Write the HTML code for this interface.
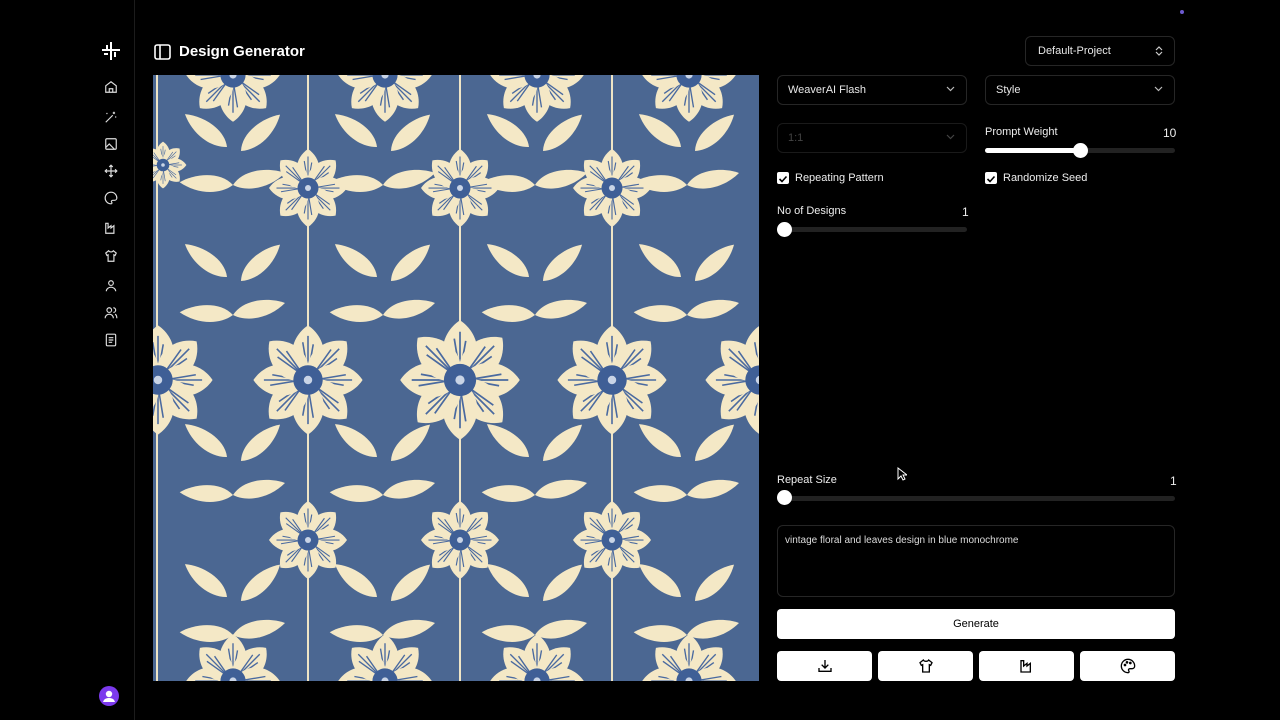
<!DOCTYPE html>
<html><head><meta charset="utf-8"><style>
*{box-sizing:border-box;margin:0;padding:0}
body{width:1280px;height:720px;background:#000;font-family:"Liberation Sans",sans-serif;color:#fff;position:relative;overflow:hidden}
.sb{position:absolute;left:0;top:0;width:135px;height:720px;border-right:1px solid #1c1c1c}
.a{position:absolute}
.sel{position:absolute;border:1px solid #262626;border-radius:6px;font-size:11px;padding-left:10px;display:flex;align-items:center;color:#e8e8e8}
.sel svg{position:absolute;right:11px;top:50%;margin-top:-4px}
.lbl{position:absolute;font-size:11px;color:#eee}
.track{position:absolute;height:5px;background:#222;border-radius:3px}
.thumb{position:absolute;width:15px;height:15px;border-radius:50%;background:#fff}
.cb{position:absolute;width:12px;height:12px;background:#fff;border-radius:2px}
.btn{position:absolute;background:#fff;border-radius:4px;color:#000;display:flex;align-items:center;justify-content:center}
</style></head><body>
<div class="sb"></div>
<svg class="a" style="left:100px;top:41px" width="22" height="20" viewBox="0 0 22 20" stroke="#fff" stroke-width="2" fill="none"><path d="M2 9h18M11 1v18M7 4v4M15 11v5M4 13h4"/></svg>
<svg class="a" viewBox="0 0 24 24" style="left:104px;top:80px" width="14" height="14" fill="none" stroke="#ddd" stroke-width="2"><path d="M3 10l9-7 9 7v11H3z M9 21v-6h6v6"/></svg>
<svg class="a" viewBox="0 0 24 24" style="left:104px;top:110px" width="14" height="14" fill="none" stroke="#ddd" stroke-width="2"><path d="M3 21L15 9M17 3v4M15 5h4M20 11v2M5 5v2"/></svg>
<svg class="a" viewBox="0 0 24 24" style="left:104px;top:137px" width="14" height="14" fill="none" stroke="#ddd" stroke-width="2"><rect x="3" y="3" width="18" height="18" rx="2"/><path d="M3 18l6-6 9 9M9 9h.01"/></svg>
<svg class="a" viewBox="0 0 24 24" style="left:104px;top:164px" width="14" height="14" fill="none" stroke="#ddd" stroke-width="2"><path d="M12 2v20M2 12h20M9 5l3-3 3 3M9 19l3 3 3-3M5 9l-3 3 3 3M19 9l3 3-3 3"/></svg>
<svg class="a" viewBox="0 0 24 24" style="left:104px;top:191px" width="14" height="14" fill="none" stroke="#ddd" stroke-width="2"><path d="M12 2a10 10 0 000 20c2 0 2-2 1-3s0-3 2-3h3a4 4 0 004-4c0-5-4-10-10-10z"/></svg>
<svg class="a" viewBox="0 0 24 24" style="left:104px;top:221px" width="14" height="14" fill="none" stroke="#ddd" stroke-width="2"><path d="M3 21V4h4v8l5-4v4l5-4v13z"/></svg>
<svg class="a" viewBox="0 0 24 24" style="left:104px;top:249px" width="14" height="14" fill="none" stroke="#ddd" stroke-width="2"><path d="M8 3l-5 4 2 4 2-1v11h10V10l2 1 2-4-5-4c-1 2-3 2-4 2s-3 0-4-2z"/></svg>
<svg class="a" viewBox="0 0 24 24" style="left:104px;top:279px" width="14" height="14" fill="none" stroke="#ddd" stroke-width="2"><circle cx="12" cy="7" r="4"/><path d="M4 21c0-4 4-7 8-7s8 3 8 7"/></svg>
<svg class="a" viewBox="0 0 24 24" style="left:104px;top:306px" width="14" height="14" fill="none" stroke="#ddd" stroke-width="2"><circle cx="9" cy="7" r="4"/><path d="M2 21c0-4 3-7 7-7s7 3 7 7M16 3a4 4 0 010 8M19 14c2 1 3 4 3 7"/></svg>
<svg class="a" viewBox="0 0 24 24" style="left:104px;top:333px" width="14" height="14" fill="none" stroke="#ddd" stroke-width="2"><rect x="4" y="2" width="16" height="20" rx="2"/><path d="M8 8h8M8 12h8M8 16h6"/></svg>
<div class="a" style="left:99px;top:686px;width:20px;height:20px;border-radius:50%;background:#7c3aed"><svg viewBox="0 0 20 20" width="20" height="20" fill="#fff"><circle cx="10" cy="8" r="3.2"/><path d="M4 16c1-3 3-4 6-4s5 1 6 4z"/></svg></div>
<div class="a" style="left:1180px;top:10px;width:4px;height:4px;border-radius:50%;background:#6d5bd0"></div>
<svg class="a" style="left:154px;top:44px" width="17" height="16" viewBox="0 0 17 16" fill="none" stroke="#fff" stroke-width="1.6"><rect x="1" y="1" width="15" height="14" rx="2"/><path d="M6 1v14"/></svg>
<div class="a" style="left:179px;top:43px;font-size:15px;font-weight:bold">Design Generator</div>

<svg class="a" style="left:153px;top:75px" width="606" height="606" viewBox="0 0 606 606">
<defs>
<g id="p"><path d="M0 0C-22 -14 -18 -40 0 -52C18 -40 22 -14 0 0z" fill="#f4e8c6"/><path d="M0 -6L-5 -36M0 -6L5 -34M0 -6L0 -42" stroke="#4a6aa0" stroke-width="1.5"/></g>
<g id="fl"><use href="#p"/><use href="#p" transform="rotate(45)"/><use href="#p" transform="rotate(90)"/><use href="#p" transform="rotate(135)"/><use href="#p" transform="rotate(180)"/><use href="#p" transform="rotate(225)"/><use href="#p" transform="rotate(270)"/><use href="#p" transform="rotate(315)"/><circle r="14" fill="#3f5f96"/><circle r="4" fill="#c9d4e6"/></g>
<path id="lf" d="M0 0C10 -16 36 -18 52 -12C38 2 16 8 0 0z" fill="#f4e8c6"/>
<g id="lv"><use href="#lf"/><use href="#lf" transform="translate(8,-34) rotate(-30)"/><use href="#lf" transform="scale(-1,1) rotate(10)"/><use href="#lf" transform="translate(-6,-38) scale(-1,1) rotate(-25)"/></g>
</defs>
<rect width="606" height="606" fill="#4b6792"/>
<g stroke="#efe5c6" stroke-width="2"><path d="M155 0V606M307 0V606M459 0V606M4 0V606"/></g>
<g>
<use href="#lv" transform="translate(80,110)"/><use href="#lv" transform="translate(230,110)"/><use href="#lv" transform="translate(382,110)"/><use href="#lv" transform="translate(534,110)"/>
<use href="#lv" transform="translate(80,240)"/><use href="#lv" transform="translate(230,240)"/><use href="#lv" transform="translate(382,240)"/><use href="#lv" transform="translate(534,240)"/>
<use href="#lv" transform="translate(80,420)"/><use href="#lv" transform="translate(230,420)"/><use href="#lv" transform="translate(382,420)"/><use href="#lv" transform="translate(534,420)"/>
<use href="#lv" transform="translate(80,560)"/><use href="#lv" transform="translate(230,560)"/><use href="#lv" transform="translate(382,560)"/><use href="#lv" transform="translate(534,560)"/>
</g>
<g>
<use href="#fl" transform="translate(5,305) scale(1.05)"/><use href="#fl" transform="translate(155,305) scale(1.05)"/><use href="#fl" transform="translate(307,305) scale(1.15)"/><use href="#fl" transform="translate(459,305) scale(1.05)"/><use href="#fl" transform="translate(607,305) scale(1.05)"/>
<use href="#fl" transform="translate(155,113) scale(0.75)"/><use href="#fl" transform="translate(307,113) scale(0.75)"/><use href="#fl" transform="translate(459,113) scale(0.75)"/><use href="#fl" transform="translate(10,90) scale(0.45)"/>
<use href="#fl" transform="translate(155,465) scale(0.75)"/><use href="#fl" transform="translate(307,465) scale(0.75)"/><use href="#fl" transform="translate(459,465) scale(0.75)"/>
<use href="#fl" transform="translate(80,0) scale(0.9)"/><use href="#fl" transform="translate(232,0) scale(0.9)"/><use href="#fl" transform="translate(384,0) scale(0.9)"/><use href="#fl" transform="translate(536,0) scale(0.9)"/>
<use href="#fl" transform="translate(80,606) scale(0.9)"/><use href="#fl" transform="translate(232,606) scale(0.9)"/><use href="#fl" transform="translate(384,606) scale(0.9)"/><use href="#fl" transform="translate(536,606) scale(0.9)"/>
</g>
</svg>

<div class="sel" style="left:1025px;top:36px;width:150px;height:30px;padding-left:12px">Default-Project<svg width="8" height="10" viewBox="0 0 8 10" fill="none" stroke="#ccc" stroke-width="1.2" style="margin-top:-5px"><path d="M1 4l3-3 3 3M1 6l3 3 3-3"/></svg></div>
<div class="sel" style="left:777px;top:75px;width:190px;height:30px">WeaverAI Flash<svg width="9" height="6" viewBox="0 0 9 6" fill="none" stroke="#bbb" stroke-width="1.2"><path d="M1 1l3.5 3.5L8 1"/></svg></div>
<div class="sel" style="left:985px;top:75px;width:190px;height:30px">Style<svg width="9" height="6" viewBox="0 0 9 6" fill="none" stroke="#bbb" stroke-width="1.2"><path d="M1 1l3.5 3.5L8 1"/></svg></div>
<div class="sel" style="left:777px;top:123px;width:190px;height:30px;color:#444;border-color:#1a1a1a">1:1<svg width="9" height="6" viewBox="0 0 9 6" fill="none" stroke="#444" stroke-width="1.2"><path d="M1 1l3.5 3.5L8 1"/></svg></div>

<div class="lbl" style="left:985px;top:126px">Prompt Weight</div><div class="lbl" style="left:1163px;top:126px;font-size:12px">10</div>
<div class="track" style="left:985px;top:148px;width:190px"></div><div class="track" style="left:985px;top:148px;width:96px;background:#fff"></div><div class="thumb" style="left:1073px;top:143px"></div>

<div class="cb" style="left:777px;top:172px"><svg width="12" height="12" viewBox="0 0 12 12" fill="none" stroke="#000" stroke-width="1.6"><path d="M2.5 6l2.5 2.5 4.5-5"/></svg></div><div class="lbl" style="left:795px;top:172px">Repeating Pattern</div>
<div class="cb" style="left:985px;top:172px"><svg width="12" height="12" viewBox="0 0 12 12" fill="none" stroke="#000" stroke-width="1.6"><path d="M2.5 6l2.5 2.5 4.5-5"/></svg></div><div class="lbl" style="left:1003px;top:172px">Randomize Seed</div>

<div class="lbl" style="left:777px;top:205px">No of Designs</div><div class="lbl" style="left:962px;top:205px;font-size:12px">1</div>
<div class="track" style="left:777px;top:227px;width:190px"></div><div class="thumb" style="left:777px;top:222px"></div>

<div class="lbl" style="left:777px;top:474px">Repeat Size</div><div class="lbl" style="left:1170px;top:474px;font-size:12px">1</div>
<div class="track" style="left:777px;top:496px;width:398px"></div><div class="thumb" style="left:777px;top:490px"></div>

<div class="a" style="left:777px;top:525px;width:398px;height:72px;border:1px solid #262626;border-radius:6px;padding:9px 7px;font-size:10px;color:#ddd">vintage floral and leaves design in blue monochrome</div>

<div class="btn" style="left:777px;top:609px;width:398px;height:30px;font-size:11px">Generate</div>
<div class="btn" style="left:777px;top:651px;width:95px;height:30px"><svg width="16" height="16" viewBox="0 0 24 24" fill="none" stroke="#000" stroke-width="2"><path d="M12 3v12M7 10l5 5 5-5M3 15v5h18v-5"/></svg></div>
<div class="btn" style="left:878px;top:651px;width:95px;height:30px"><svg width="16" height="16" viewBox="0 0 24 24" fill="none" stroke="#000" stroke-width="2"><path d="M8 3l-5 4 2 4 2-1v11h10V10l2 1 2-4-5-4c-1 2-3 2-4 2s-3 0-4-2z"/></svg></div>
<div class="btn" style="left:979px;top:651px;width:95px;height:30px"><svg width="16" height="16" viewBox="0 0 24 24" fill="none" stroke="#000" stroke-width="2"><path d="M3 21V4h4v8l5-4v4l5-4v13z"/></svg></div>
<div class="btn" style="left:1080px;top:651px;width:95px;height:30px"><svg width="16" height="16" viewBox="0 0 24 24" fill="none" stroke="#000" stroke-width="2"><path d="M12 2a10 10 0 000 20c2 0 2-2 1-3s0-3 2-3h3a4 4 0 004-4c0-5-4-10-10-10z"/><circle cx="7.5" cy="10.5" r="1"/><circle cx="10.5" cy="6.5" r="1"/><circle cx="15.5" cy="7.5" r="1"/></svg></div>
<svg class="a" style="left:897px;top:467px" width="10" height="14" viewBox="0 0 10 14"><path d="M1 1v11l3-3 2 4 2-1-2-4h4z" fill="#000" stroke="#fff" stroke-width="1"/></svg>
</body></html>
